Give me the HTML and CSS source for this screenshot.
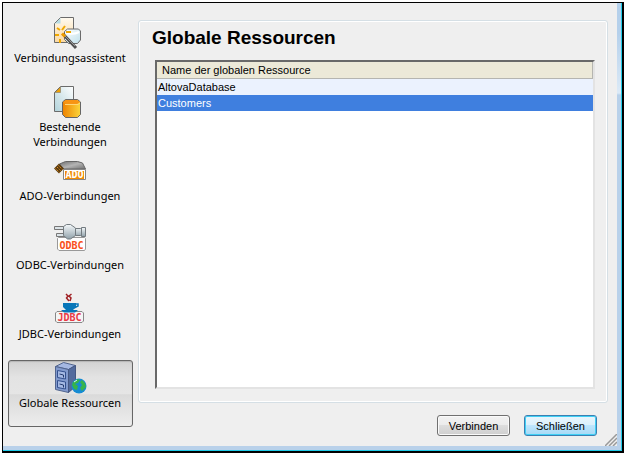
FILE: index.html
```html
<!DOCTYPE html>
<html lang="de">
<head>
  <meta charset="UTF-8"/>
  <meta name="viewport" content="width=device-width, initial-scale=1.0"/>
  <title>Globale Ressourcen</title>
  <link rel="stylesheet" href="styles.css">
</head>
<body>

  <div class="window">
    <div class="dialog">

      <!-- Connection types -->
      <nav class="sidebar">
        <button class="nav-item" type="button">
          <svg class="icon" viewBox="0 0 32 32" aria-hidden="true">
            <defs>
              <linearGradient id="paperWarm" x1="0" y1="0" x2="0" y2="1">
                <stop offset="0" stop-color="#fffaf0"/><stop offset="1" stop-color="#fbd9a0"/>
              </linearGradient>
              <linearGradient id="drum" x1="0" y1="0" x2="1" y2="1">
                <stop offset="0" stop-color="#ffffff"/><stop offset="1" stop-color="#bfdfea"/>
              </linearGradient>
            </defs>
            <path d="M6.5.5h13v25H.5v-19z" fill="url(#paperWarm)" stroke="#6b6b6b"/>
            <path d="M1 6.5h5.5V1z" fill="#b6dbe3"/>
            <path d="M10.5 14.5l3-2.5h11l2 2v9l-3 3.5h-9l-4-4z" fill="url(#drum)" stroke="#6b6b6b"/>
            <path d="M13 16q6 2 12-1" fill="none" stroke="#fff" stroke-width="2"/>
            <path d="M3 11l3 2M11 9l-3 4M1 18h4M6 22v4M12 15h5" stroke="#f0a800" stroke-width="2"/>
            <path d="M9 17l13 14" stroke="#505050" stroke-width="3"/>
            <path d="M11 19l10 10" stroke="#999"/>
            <path d="M8 16.5l3 3" stroke="#ef9c00" stroke-width="3"/>
          </svg>
          <span>Verbindungsassistent</span>
        </button>

        <button class="nav-item" type="button">
          <svg class="icon" viewBox="0 0 32 32" aria-hidden="true">
            <defs>
              <linearGradient id="paperCool" x1="1" y1="0" x2="0" y2="1">
                <stop offset="0" stop-color="#ffffff"/><stop offset="1" stop-color="#b0d2da"/>
              </linearGradient>
              <linearGradient id="database" x1="0" y1="0" x2="1" y2="0">
                <stop offset="0" stop-color="#ee8200"/><stop offset="1" stop-color="#fbd63c"/>
              </linearGradient>
            </defs>
            <path d="M6.5.5h13v25H.5v-19z" fill="url(#paperCool)" stroke="#6b6b6b"/>
            <path d="M1 6.5h5.5V1z" fill="#f0a000" stroke="#6b6b6b" stroke-width=".5"/>
            <path d="M8.500 16l3-2.5h12l3 2.5v12.500l-3 3h-12l-3-3z" fill="url(#database)" stroke="#666"/>
            <path d="M9 16l3-2h11l3 2-3 2H12z" fill="#f79414"/>
            <path d="M11 18.5h13l2-1.500" fill="none" stroke="#ffd777"/>
          </svg>
          <span>Bestehende<br>Verbindungen</span>
        </button>

        <button class="nav-item" type="button">
          <svg class="icon" viewBox="0 0 32 32" aria-hidden="true">
            <defs>
              <linearGradient id="hood" x1="0" y1="0" x2="1" y2="1">
                <stop offset="0" stop-color="#6c6c6c"/><stop offset=".5" stop-color="#b4b4b4"/><stop offset="1" stop-color="#707070"/>
              </linearGradient>
            </defs>
            <path d="M5.5 9l6-2.5h12l5 1.5 3 6H9z" fill="url(#hood)" stroke="#666"/>
            <path d="M0 13.5l5-5 5 5-5 5z" fill="#5c3c10"/>
            <path d="M1.5 13.5l4 4M3 12l4 4M4.5 10.5l4 4" stroke="#e09020" stroke-dasharray="1.4 1"/>
            <path d="M9.5 14.5v10h22v-10z" fill="#fff" stroke="#858585"/>
            <path d="M11 16h19v8H11z" fill="#f08c08"/>
            <text class="icon-text" x="20.5" y="23" fill="#fff">ADO</text>
          </svg>
          <span>ADO-Verbindungen</span>
        </button>

        <button class="nav-item" type="button">
          <svg class="icon" viewBox="0 0 32 32" aria-hidden="true">
            <defs>
              <linearGradient id="plug" x1="0" y1="0" x2="0" y2="1">
                <stop offset="0" stop-color="#f4f8fa"/><stop offset="1" stop-color="#91a2ab"/>
              </linearGradient>
            </defs>
            <path d="M4.5 13.5h26l1 1V25l-1 1.500H5L3.500 25V14.5z" fill="#fff" stroke="#999"/>
            <path d="M.5 2.5h10v3H.5zM2.500 9.5h9v3h-9z" fill="#dce4e8" stroke="#777"/>
            <path d="M9.5 2.5l3-2h4l5 3.500v7.500l-5 3.500h-3l-4-3.500z" fill="url(#plug)" stroke="#737b80"/>
            <path d="M21.5 4.500h5l1-1h4v9h-4l-1-1h-5z" fill="url(#plug)" stroke="#737b80"/>
            <path d="M27.5 4v8" stroke="#737b80"/>
            <text class="icon-text" x="17.5" y="25" fill="#f9501c">ODBC</text>
          </svg>
          <span>ODBC-Verbindungen</span>
        </button>

        <button class="nav-item" type="button">
          <svg class="icon" viewBox="0 0 32 32" aria-hidden="true">
            <path d="M3 18.5h25l1.500 1.500v8L28 29.500H3L1.500 28v-8z" fill="#f5f5f5" stroke="#888"/>
            <path d="M12 1l2 2-1.500 2L15 8M17.500 1L15 3l2 2-1 3" fill="none" stroke="#a02024" stroke-width="1.500"/>
            <path d="M9 10h13v4l-3 3h-7l-3-3z" fill="#0876b9"/>
            <path d="M21 11h3v2l-4 2" fill="none" stroke="#0876b9" stroke-width="1.500"/>
            <path d="M7 17h17l-3 2.5H10z" fill="#0876b9"/>
            <text class="icon-text" x="15.5" y="28" fill="#e93a43">JDBC</text>
          </svg>
          <span>JDBC-Verbindungen</span>
        </button>

        <button class="nav-item active" type="button">
          <svg class="icon" viewBox="0 0 32 32" aria-hidden="true">
            <path d="M1.5 4.500l8-4 12 3-7 4z" fill="#a5b8e2" stroke="#52658e"/>
            <path d="M1.5 4.500l13 3v23l-13-3z" fill="#829acd" stroke="#52658e"/>
            <path d="M14.5 7.500l7-4v21l-7 6z" fill="#536b9d" stroke="#465883"/>
            <path d="M3.5 8.500l8 1.500v7l-8-1.500zM3.500 18.500l8 1.500v7l-8-1.500z" fill="#a5b9e3" stroke="#33508e"/>
            <path d="M5.5 12l4 1v2.500M5.500 22l4 1v2.500" fill="none" stroke="#263c70"/>
            <circle cx="25" cy="24" r="7.5" fill="#168bd2"/>
            <path d="M19 20l5-3 2 1-2 3-3 1 3 2-1 4-3-1-2-4zM28 18l3 3 1 4-4 4-2-3 2-3-2-3z" fill="#36b44b"/>
            <path d="M20 20l3-2" stroke="#d9f8ff"/>
          </svg>
          <span>Globale Ressourcen</span>
        </button>
      </nav>

      <!-- Main Content -->
      <main class="main">
        <section class="panel">
          <h1>Globale Ressourcen</h1>
          <div class="list">
            <table>
              <thead>
                <tr><th>Name der globalen Ressource</th></tr>
              </thead>
              <tbody>
                <tr><td>AltovaDatabase</td></tr>
                <tr class="selected"><td>Customers</td></tr>
              </tbody>
            </table>
          </div>
        </section>

        <div class="actions">
          <button class="btn" type="button">Verbinden</button>
          <button class="btn btn-default" type="button">Schließen</button>
        </div>
      </main>

      <svg class="grip" viewBox="0 0 12 12" aria-hidden="true">
        <path d="M0 12L12 0M4 12l8-8M8 12l4-4" stroke="#999" stroke-width="1.5"/>
      </svg>
    </div>
  </div>

</body>
</html>
```
FILE: styles.css
```css
* {
  box-sizing: border-box;
  margin: 0; padding: 0;
}

body {
  background: #fff;
  min-height: 100vh;
  padding: 2px;
  display: flex;
  font-family: "Liberation Sans", Arial, sans-serif;
  font-size: 11px;
  color: #000;
}

button {
  font: inherit;
  color: inherit;
}

/* Window frame */
.window {
  flex: 1;
  display: flex;
  border: 1px solid #000;
  border-right-width: 2px;
  border-bottom-width: 2px;
  background: linear-gradient(#b5d0eb 0, #b5d0eb 30px, #dceaf7 90px, #b9d1ea 92px);
  box-shadow: inset -1px -1px 0 #1fcbe8;
  padding: 0 5px 5px 0;
}

.dialog {
  position: relative;
  flex: 1;
  display: flex;
  gap: 5px;
  background: #efefef;
  padding: 12px 9px 10px 5px;
}

/* Sidebar */
.sidebar {
  width: 125px;
  display: flex;
  flex-direction: column;
  gap: 2px;
}

.nav-item {
  height: 67px;
  display: flex;
  flex-direction: column;
  align-items: center;
  gap: 1px;
  padding: 1px 1px 0 0;
  border: 1px solid transparent;
  border-radius: 3px;
  background: none;
  font-family: "Noto Sans", "Open Sans", sans-serif;
  font-size: 11px;
  line-height: 15px;
  text-align: center;
  white-space: nowrap;
}

.nav-item.active {
  border-color: #666;
  background: linear-gradient(#d2d2d2, #e3e3e3 25%, #e5e5e5 50%, #dadada 52%, #ededed);
  box-shadow: inset 0 1px 1px #b5b5b5;
}

.icon {
  width: 32px;
  height: 32px;
  flex: none;
  overflow: visible;
}

.icon-text {
  font-family: "DejaVu Sans Mono", monospace;
  font-size: 10px;
  font-weight: bold;
  text-anchor: middle;
}

/* Content */
.main {
  flex: 1;
  display: flex;
  flex-direction: column;
  gap: 12px;
}

.panel {
  flex: 1;
  display: flex;
  flex-direction: column;
  gap: 10px;
  margin-top: 5px;
  padding: 6px 12px 13px 16px;
  border: 1px solid #d5dfe5;
  border-radius: 3px;
  box-shadow: inset 0 0 0 1px #fff;
}

h1 {
  padding-top: 1px;
  font-size: 19px;
  line-height: 20px;
  margin: 0 0 2px -3px;
}

.list {
  flex: 1;
  background: #fff;
  border: 2px solid;
  border-color: #696969 #e3e3e3 #e3e3e3 #696969;
}

table {
  width: 100%;
  border-collapse: separate;
  border-spacing: 0;
}

th, td {
  height: 16px;
  line-height: 16px;
  font-weight: normal;
  text-align: left;
}

th {
  background: #ece9d8;
  border-right: 1px solid #b5b5b0;
  border-bottom: 1px solid #b5b5b0;
  padding-left: 5px;
}

td {
  background: #ebf2fe;
  padding-left: 1px;
}

.selected td {
  background: #3f7fdf;
  color: #fff;
}

.actions {
  display: flex;
  justify-content: flex-end;
  gap: 14px;
  padding-right: 11px;
}

.btn {
  width: 73px;
  height: 21px;
  border: 1px solid #707070;
  border-radius: 3px;
  background: linear-gradient(#f2f2f2, #ebebeb 50%, #dddddd 50%, #cfcfcf);
  box-shadow: inset 0 0 0 1px #fafafa;
}

.btn-default {
  border-color: #3c7fb1;
  background: linear-gradient(#eaf6fd, #d9f0fc 50%, #bee6fd 50%, #a7d9f5);
  box-shadow: inset 0 0 0 1px #3fd0f5;
}

/* Resize grip lies over the corner */
.grip {
  position: absolute;
  right: 0;
  bottom: 0;
  width: 12px;
  height: 12px;
}
```
